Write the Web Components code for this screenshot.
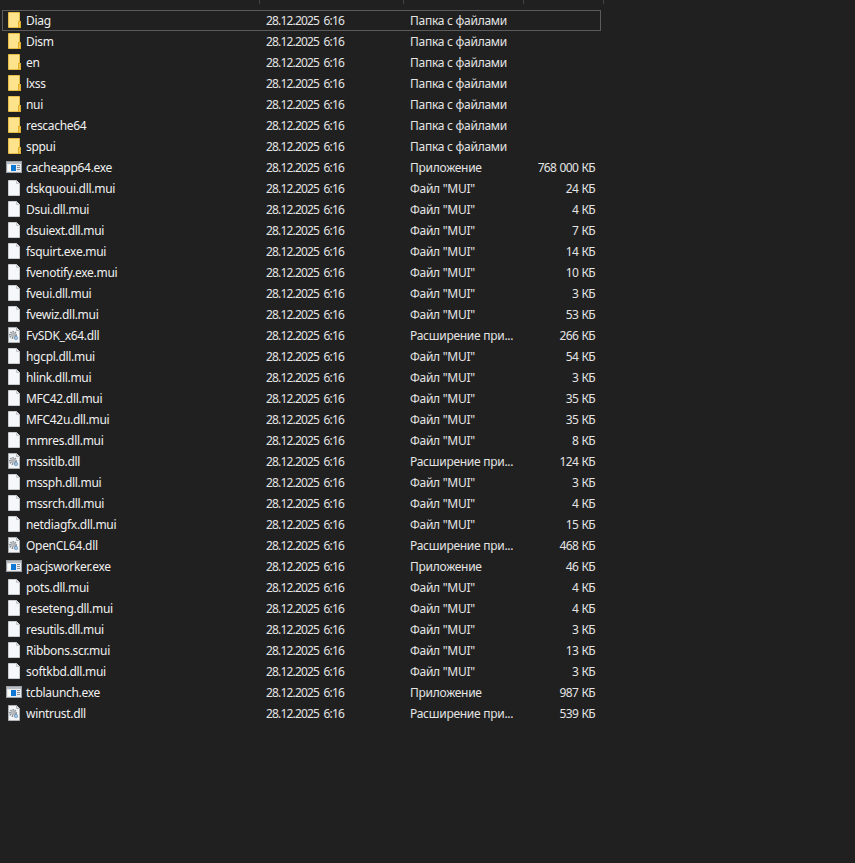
<!DOCTYPE html>
<html lang="ru">
<head>
<meta charset="utf-8">
<title>Проводник</title>
<style>
  html, body { margin: 0; background: #202020; }
  body { font-family: "Noto Sans", "Open Sans", sans-serif; font-size: 12px; color: #f0f0f0; }
</style>
</head>
<body>
<file-list>
  <file-row icon="folder" selected name="Diag" type="Папка с файлами"></file-row>
  <file-row icon="folder" name="Dism" type="Папка с файлами"></file-row>
  <file-row icon="folder" name="en" type="Папка с файлами"></file-row>
  <file-row icon="folder" name="lxss" type="Папка с файлами"></file-row>
  <file-row icon="folder" name="nui" type="Папка с файлами"></file-row>
  <file-row icon="folder" name="rescache64" type="Папка с файлами"></file-row>
  <file-row icon="folder" name="sppui" type="Папка с файлами"></file-row>
  <file-row icon="exe" name="cacheapp64.exe" type="Приложение" size="768 000 КБ"></file-row>
  <file-row icon="file" name="dskquoui.dll.mui" type="Файл &quot;MUI&quot;" size="24 КБ"></file-row>
  <file-row icon="file" name="Dsui.dll.mui" type="Файл &quot;MUI&quot;" size="4 КБ"></file-row>
  <file-row icon="file" name="dsuiext.dll.mui" type="Файл &quot;MUI&quot;" size="7 КБ"></file-row>
  <file-row icon="file" name="fsquirt.exe.mui" type="Файл &quot;MUI&quot;" size="14 КБ"></file-row>
  <file-row icon="file" name="fvenotify.exe.mui" type="Файл &quot;MUI&quot;" size="10 КБ"></file-row>
  <file-row icon="file" name="fveui.dll.mui" type="Файл &quot;MUI&quot;" size="3 КБ"></file-row>
  <file-row icon="file" name="fvewiz.dll.mui" type="Файл &quot;MUI&quot;" size="53 КБ"></file-row>
  <file-row icon="dll" name="FvSDK_x64.dll" type="Расширение при..." size="266 КБ"></file-row>
  <file-row icon="file" name="hgcpl.dll.mui" type="Файл &quot;MUI&quot;" size="54 КБ"></file-row>
  <file-row icon="file" name="hlink.dll.mui" type="Файл &quot;MUI&quot;" size="3 КБ"></file-row>
  <file-row icon="file" name="MFC42.dll.mui" type="Файл &quot;MUI&quot;" size="35 КБ"></file-row>
  <file-row icon="file" name="MFC42u.dll.mui" type="Файл &quot;MUI&quot;" size="35 КБ"></file-row>
  <file-row icon="file" name="mmres.dll.mui" type="Файл &quot;MUI&quot;" size="8 КБ"></file-row>
  <file-row icon="dll" name="mssitlb.dll" type="Расширение при..." size="124 КБ"></file-row>
  <file-row icon="file" name="mssph.dll.mui" type="Файл &quot;MUI&quot;" size="3 КБ"></file-row>
  <file-row icon="file" name="mssrch.dll.mui" type="Файл &quot;MUI&quot;" size="4 КБ"></file-row>
  <file-row icon="file" name="netdiagfx.dll.mui" type="Файл &quot;MUI&quot;" size="15 КБ"></file-row>
  <file-row icon="dll" name="OpenCL64.dll" type="Расширение при..." size="468 КБ"></file-row>
  <file-row icon="exe" name="pacjsworker.exe" type="Приложение" size="46 КБ"></file-row>
  <file-row icon="file" name="pots.dll.mui" type="Файл &quot;MUI&quot;" size="4 КБ"></file-row>
  <file-row icon="file" name="reseteng.dll.mui" type="Файл &quot;MUI&quot;" size="4 КБ"></file-row>
  <file-row icon="file" name="resutils.dll.mui" type="Файл &quot;MUI&quot;" size="3 КБ"></file-row>
  <file-row icon="file" name="Ribbons.scr.mui" type="Файл &quot;MUI&quot;" size="13 КБ"></file-row>
  <file-row icon="file" name="softkbd.dll.mui" type="Файл &quot;MUI&quot;" size="3 КБ"></file-row>
  <file-row icon="exe" name="tcblaunch.exe" type="Приложение" size="987 КБ"></file-row>
  <file-row icon="dll" name="wintrust.dll" type="Расширение при..." size="539 КБ"></file-row>
</file-list>

<script>
// Иконки 16x16: папка, exe, пустой файл, dll с шестерёнкой
const ICONS = {
  folder: `
    <path d="M2.5 .5h11v15h-11z" fill="#fde38c" stroke="#e8bd45"/>
    <rect x="12.5" y="9.5" width="2" height="6" fill="#f4c94f" stroke="#dfae2f"/>`,
  exe: `
    <rect x="0.5" y="2.5" width="15" height="11" fill="#e9ebee" stroke="#9aa0a6"/>
    <rect x="1" y="3" width="14" height="2" fill="#b9bec4"/>
    <rect x="2" y="6" width="3" height="6" fill="#ffffff"/>
    <rect x="5" y="6" width="5" height="6" fill="#0f78d4"/>
    <path d="M11 6.5h3M11 8.5h3M11 10.5h3" stroke="#8a9097"/>`,
  file: `
    <path d="M2.5 .5h8l3 3v12h-11z" fill="#f6f7f8" stroke="#c9ccd0"/>
    <path d="M10.5 .5v3h3" fill="#e2e4e7" stroke="#c2c5c9"/>`,
  dll: `
    <path d="M2.5 .5h8l3 3v12h-11z" fill="#f3f4f5" stroke="#aeb2b6"/>
    <path d="M10.5 .5v3h3" fill="#dfe1e4" stroke="#aeb2b6"/>
    <circle cx="7" cy="8" r="3" fill="none" stroke="#8d939a" stroke-width="2" stroke-dasharray="1.4 .8"/>
    <circle cx="7" cy="8" r="1.4" fill="#d4d7da" stroke="#80868d" stroke-width=".7"/>
    <circle cx="10" cy="11" r="1.7" fill="#9fc3e4" stroke="#6d94b8" stroke-width=".7"/>`,
};

// Контейнер списка: риски заголовка сверху, строки через slot
class FileList extends HTMLElement {
  constructor() {
    super();
    this.attachShadow({ mode: "open" }).innerHTML = `
      <style>
        :host { display: block; width: 604px; }
        .ticks {
          display: grid;
          grid-template-columns: 260px 144px 120px 80px;
          height: 4px;
          margin-bottom: 6px;
        }
        .ticks i { border-right: 1px solid #424242; }
        .rows { display: flex; flex-direction: column; padding-left: 2px; }
      </style>
      <div class="ticks"><i></i><i></i><i></i><i></i></div>
      <div class="rows"><slot></slot></div>`;
  }
}

class FileRow extends HTMLElement {
  constructor() {
    super();
    this.attachShadow({ mode: "open" });
  }

  connectedCallback() {
    const a = (n) => this.getAttribute(n) ?? "";
    this.shadowRoot.innerHTML = `
      <style>
        :host {
          display: grid;
          grid-template-columns: 258px 144px 96px 94px;
          align-items: start;
          box-sizing: border-box;
          width: 599px;
          height: 21px;
          line-height: 19px;
          white-space: nowrap;
          border: 1px solid transparent;
        }
        :host([selected]) { border-color: #5b5b5b; }
        .name { display: flex; align-items: flex-start; gap: 4px; padding-left: 3px; letter-spacing: -0.3px; }
        svg { width: 16px; height: 16px; flex: none; margin-top: 1px; }
        .date, .type { padding-left: 5px; color: #e4e4e4; }
        .date { letter-spacing: -0.82px; word-spacing: 2px; }
        .type { letter-spacing: -0.27px; }
        .size { color: #e4e4e4; text-align: right; letter-spacing: -0.7px; word-spacing: 1px; }
      </style>
      <div class="name"><svg viewBox="0 0 16 16">${ICONS[a("icon")]}</svg><span>${a("name")}</span></div>
      <div class="date">${a("date") || "28.12.2025 6:16"}</div>
      <div class="type">${a("type")}</div>
      <div class="size">${a("size")}</div>`;
  }
}

customElements.define("file-list", FileList);
customElements.define("file-row", FileRow);
</script>
</body>
</html>
